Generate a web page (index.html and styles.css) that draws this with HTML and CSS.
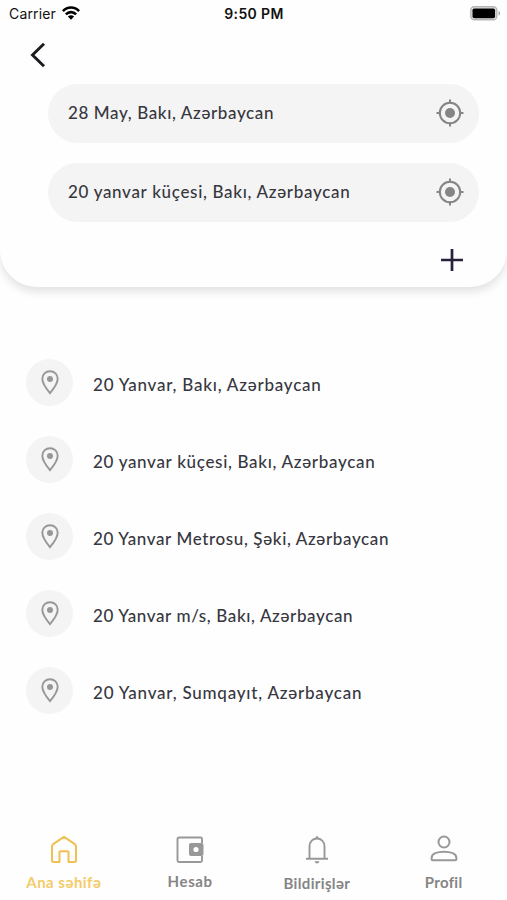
FILE: index.html
```html
<!DOCTYPE html>
<html lang="az">
<head>
<meta charset="utf-8">
<meta name="viewport" content="width=device-width, initial-scale=1">
<title>Ünvan</title>
<link rel="stylesheet" href="styles.css">
</head>
<body>
<svg class="defs" width="0" height="0">
  <symbol id="target" viewBox="0 0 28 28"><g fill="none" stroke="#858585" stroke-width="2"><circle cx="14" cy="14" r="10.2"/><path d="M14 .5v4M14 23.500v4M.5 14h4M23.500 14h4"/></g><circle cx="14" cy="14" r="5" fill="#858585"/></symbol>
  <symbol id="pin" viewBox="0 0 18 25"><path d="M9 1.200c-4.400 0-7.700 3.300-7.700 7.500C1.300 13.600 6.200 19.800 9 23.200c2.800-3.400 7.700-9.600 7.700-14.500 0-4.200-3.300-7.500-7.700-7.500z" fill="none" stroke="#979797" stroke-width="1.900"/><circle cx="9" cy="9" r="3" fill="#979797"/></symbol>
</svg>
<main class="screen">
  <header class="panel">
    <div class="status">
      <div class="carrier"><span>Carrier</span>
        <svg width="18" height="14" viewBox="0 0 18 14" fill="none" stroke="#000" stroke-width="2.600"><path d="M.9 5.100C5.400.3 12.600.3 17.100 5.100M3.900 8.300c2.800-2.900 7.400-2.900 10.200 0"/><path d="M5.900 10.500 9 13.800l3.100-3.300c-1.700-1.600-4.500-1.600-6.200 0z" fill="#000" stroke="none"/></svg>
      </div>
      <strong class="time">9:50 PM</strong>
      <svg class="battery" width="31" height="15" viewBox="0 0 31 15"><rect x=".8" y=".8" width="26" height="13" rx="3.500" fill="#e4e4e4" stroke="#b5b5b5" stroke-width="1.400"/><rect x="2.500" y="2.500" width="22.600" height="9.800" rx="1.800"/><path d="M28.500 5c2.200.8 2.200 3.800 0 4.600z" fill="#aaa"/></svg>
    </div>
    <svg class="back" width="16" height="26" viewBox="0 0 16 26" fill="none" stroke="#1b1b1f" stroke-width="2.900"><path d="M14 1.800 2.500 13 14 24.200"/></svg>
    <div class="fields">
      <div class="field"><span class="t1">28 May, Bakı, Azərbaycan</span><svg width="28" height="28"><use href="#target"/></svg></div>
      <div class="field"><span class="t2">20 yanvar küçesi, Bakı, Azərbaycan</span><svg width="28" height="28"><use href="#target"/></svg></div>
    </div>
    <svg class="plus" width="24" height="24" viewBox="0 0 24 24" stroke="#29213a" stroke-width="2.700"><path d="M12 1v22M1 12h22"/></svg>
  </header>
  <ul class="results">
    <li><i><svg width="18" height="25"><use href="#pin"/></svg></i><span class="r1">20 Yanvar, Bakı, Azərbaycan</span></li>
    <li><i><svg width="18" height="25"><use href="#pin"/></svg></i><span class="r2">20 yanvar küçesi, Bakı, Azərbaycan</span></li>
    <li><i><svg width="18" height="25"><use href="#pin"/></svg></i><span class="r3">20 Yanvar Metrosu, Şəki, Azərbaycan</span></li>
    <li><i><svg width="18" height="25"><use href="#pin"/></svg></i><span class="r4">20 Yanvar m/s, Bakı, Azərbaycan</span></li>
    <li><i><svg width="18" height="25"><use href="#pin"/></svg></i><span class="r5">20 Yanvar, Sumqayıt, Azərbaycan</span></li>
  </ul>
  <nav class="tabs">
    <a class="tab active"><svg width="28" height="30" viewBox="0 0 28 30" fill="none" stroke="#efc052" stroke-width="2" stroke-linejoin="round"><path d="M2 11.500Q2 10 3.200 9.100L14 1.800l10.800 7.300Q26 10 26 11.500V25.500q0 1.500-1.500 1.500H18.500V17q0-.8-.8-.8h-7.400q-.8 0-.8.800v10H3.500Q2 27 2 25.500z"/></svg><span class="n1">Ana səhifə</span></a>
    <a class="tab wallet"><svg width="28" height="30" viewBox="0 0 28 30"><path d="M26 8V4q0-1.500-1.500-1.500H3Q1.500 2.500 1.500 4v21.500Q1.500 27 3 27h21.500q1.500 0 1.500-1.500V21" fill="none" stroke="#989898" stroke-width="1.900"/><rect x="13" y="8" width="14.500" height="13" rx="2" fill="#989898"/><circle cx="20" cy="14.500" r="2.600" fill="#fff"/></svg><span class="n2">Hesab</span></a>
    <a class="tab bell"><svg width="24" height="30" viewBox="0 0 24 30" fill="none" stroke="#989898" stroke-width="1.900"><path d="M1 23.800h22M4.500 23.500V11.500C4.500 6.500 8 3.500 12 3.500s7.500 3 7.500 8V23.500"/><path d="M9.600 3.800Q10.500 2.500 12 .4q1.500 2.100 2.400 3.400zM9.500 26.300h5q-.6 2.300-2.500 2.300T9.500 26.300z" fill="#989898" stroke="none"/></svg><span class="n3">Bildirişlər</span></a>
    <a class="tab person"><svg width="28" height="30" viewBox="0 0 28 30" fill="none" stroke="#989898" stroke-width="2"><circle cx="14" cy="7" r="5.500"/><path d="M1.600 23c0-4.300 6-6.200 12.400-6.200s12.400 1.900 12.400 6.200v.8q0 1.500-1.500 1.500H3.100Q1.600 25.300 1.600 23.800z"/></svg><span class="n4">Profil</span></a>
  </nav>
</main>
</body>
</html>
```
FILE: styles.css
```css
* { box-sizing: border-box; }
body { margin: 0; background: #fefefe; font-family: Lato, "Noto Sans", sans-serif; color: #37373f; }
svg { display: block; flex: none; }
.defs { position: absolute; }
.screen { width: 507px; height: 900px; display: flex; flex-direction: column; overflow: hidden; }
.panel { height: 287px; flex: none; background: #fefefe; border-radius: 0 0 37px 37px; box-shadow: 0 5px 8px rgba(0,0,0,.11); }
.status { display: grid; grid-template-columns: 1fr auto 1fr; align-items: center; height: 27px; padding: 0 6px 0 9px; font: 14px/17px Inter, sans-serif; color: #111; }
.carrier { display: flex; gap: 6px; align-items: center; letter-spacing: .15px; }
.carrier svg { margin-top: -2px; }
.time { font-weight: 600; letter-spacing: .35px; margin-left: -2px; }
.battery { justify-self: end; margin-top: -1px; }
.back { margin: 15px 0 0 30px; }
.fields { display: grid; gap: 20px; margin: 16px 28px 0 48px; }
.field { height: 59px; border-radius: 30px; background: #f4f4f4; padding: 0 15px 0 20px; display: flex; align-items: center; justify-content: space-between; }
.field span, .results span { font-size: 17px; line-height: 24px; font-weight: 500; white-space: nowrap; }
.field span { margin-top: -2px; }
.field svg { margin-top: -1px; }
.plus { margin: 26px 0 0 440px; }
.results { list-style: none; margin: 72px 0 0 26px; padding: 0; display: grid; gap: 30px; }
.results li { height: 47px; display: flex; align-items: center; gap: 20px; }
.results i { width: 47px; height: 47px; border-radius: 50%; background: #f4f4f4; display: grid; place-items: center; }
.results i svg { margin-top: -1px; }
.results span { margin-top: 4px; }
.t1 { letter-spacing: .62px; }
.t2, .r2 { letter-spacing: .68px; }
.r1 { letter-spacing: .77px; }
.r3 { letter-spacing: .62px; }
.r4 { letter-spacing: .62px; }
.r5 { letter-spacing: .78px; }
.tabs { margin-top: auto; height: 65px; display: grid; grid-template-columns: repeat(4, 1fr); }
.tab { display: flex; flex-direction: column; align-items: center; color: #858585; font-size: 15px; line-height: 20px; font-weight: 700; }
.tab span { margin-top: 7px; }
.active { color: #f4cb68; padding-left: 1px; }
.wallet span { margin-top: 6px; }
.bell span { margin-top: 8px; }
.n1 { letter-spacing: .48px; }
.n2 { letter-spacing: .6px; }
.n3 { letter-spacing: .35px; }
.n4 { letter-spacing: .3px; }
```
